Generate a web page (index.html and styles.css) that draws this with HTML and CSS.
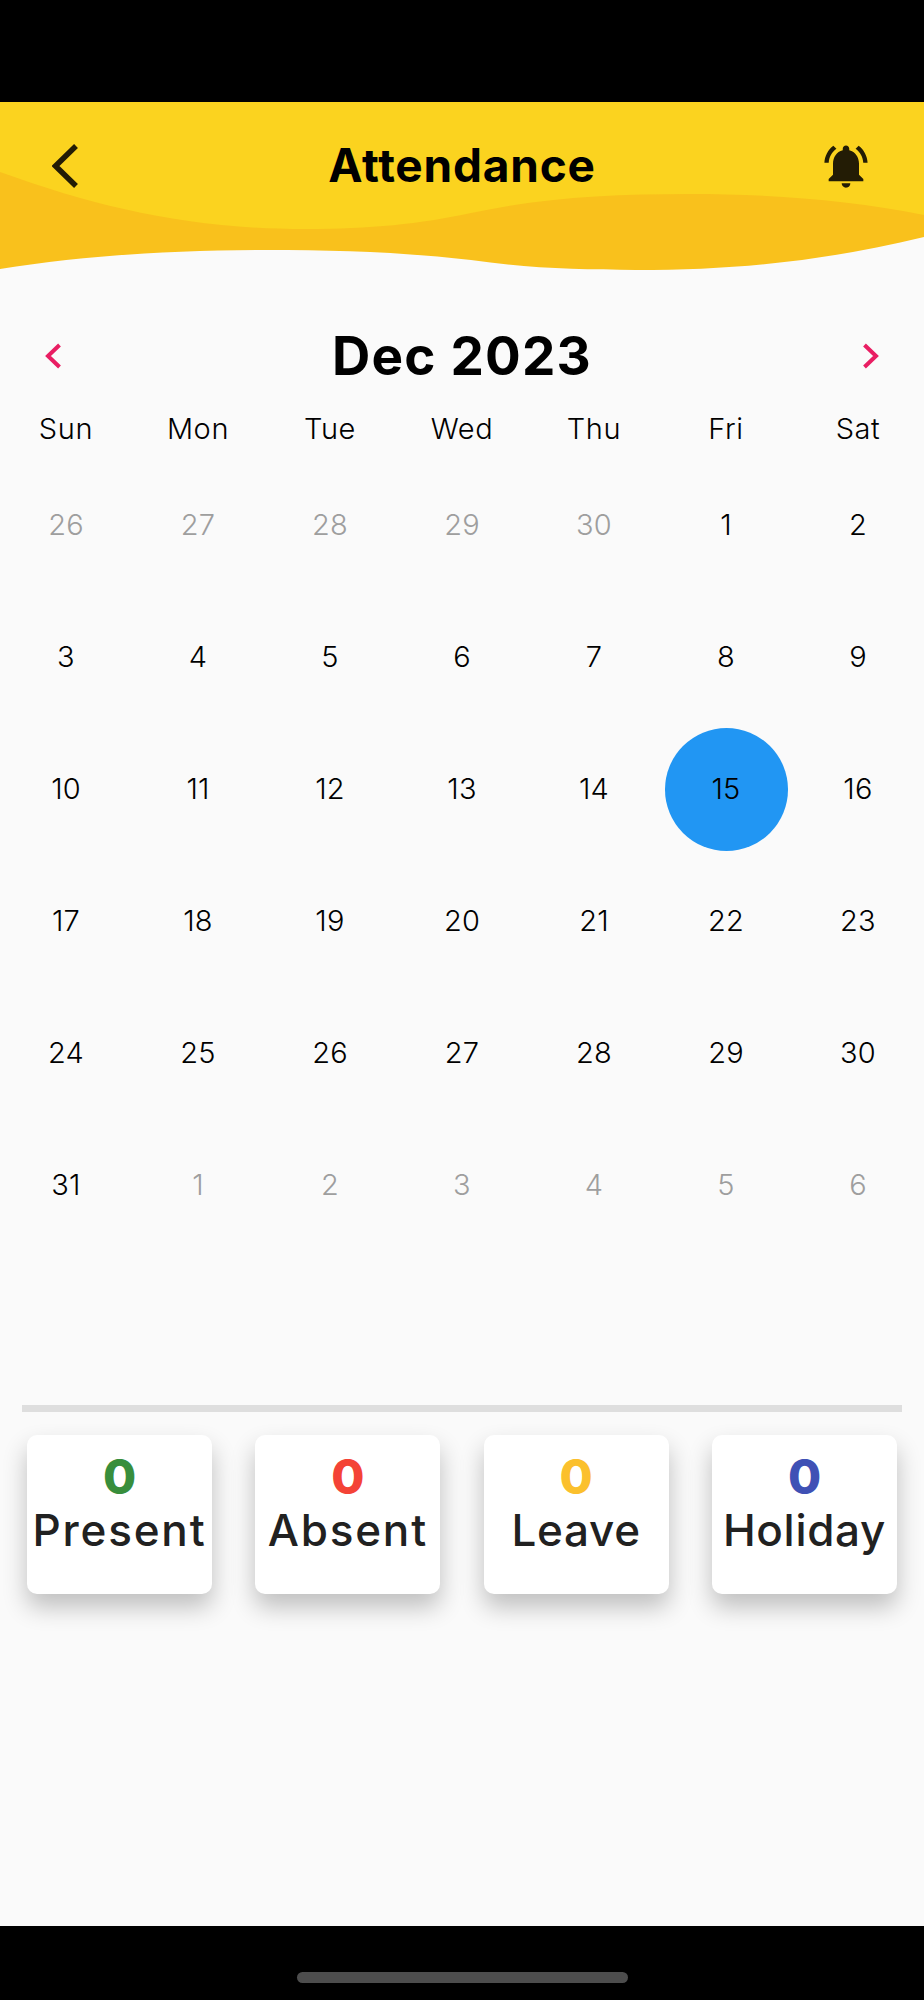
FILE: index.html
```html
<!doctype html>
<html lang="en">
    <head>
        <meta charset="UTF-8" />
        <meta name="viewport" content="width=device-width, initial-scale=1.0" />
        <title>Attendance</title>
        <link rel="stylesheet" href="styles.css">
    </head>
    <body>
        <div class="status-bar"></div>

        <main class="screen">
            <header class="app-header">
                <svg class="waves" viewBox="0 0 924 170" preserveAspectRatio="none">
                    <path fill="#f9c11c" d="M0 0H924V135C830 158 740 168 636 168C580 168 525 166 471 158C400 150 340 148 265 148C170 148 80 154 0 167Z" />
                    <path fill="#fbd31f" d="M0 0H924V113C850 98 770 92 689 92C610 92 540 96 471 111C420 122 370 127 306 127C190 127 100 106 0 70Z" />
                </svg>
                <div class="nav-bar">
                    <svg class="back-icon" viewBox="0 0 26 44">
                        <path d="M24 2L3.5 22L24 42" fill="none" stroke="#231c05" stroke-width="5.5" />
                    </svg>
                    <h1 class="page-title">Attendance</h1>
                    <svg class="bell-icon" viewBox="0 0 24 24">
                        <path fill="#231c05" d="M7.58 4.08L6.15 2.65C3.75 4.48 2.17 7.3 2.03 10.5h2c.15-2.65 1.51-4.97 3.55-6.42zm12.39 6.42h2c-.15-3.2-1.73-6.02-4.12-7.85l-1.42 1.43c2.02 1.45 3.39 3.77 3.54 6.42zM18 11c0-3.07-1.64-5.64-4.5-6.32V4c0-.83-.67-1.5-1.5-1.5s-1.5.67-1.5 1.5v.68C7.63 5.36 6 7.92 6 11v5l-2 2v1h16v-1l-2-2v-5zm-6 11c.14 0 .27-.01.4-.04.65-.14 1.18-.58 1.44-1.18.1-.24.15-.5.15-.78h-4c.01 1.1.9 2 2.01 2z" />
                    </svg>
                </div>
            </header>

            <section class="calendar">
                <div class="month-bar">
                    <svg class="month-arrow" viewBox="0 0 18 26">
                        <path d="M15.5 2L4 13L15.5 24" fill="none" stroke="#e91e63" stroke-width="4" />
                    </svg>
                    <h2 class="month-title">Dec 2023</h2>
                    <svg class="month-arrow" viewBox="0 0 18 26">
                        <path d="M2.5 2L14 13L2.5 24" fill="none" stroke="#e91e63" stroke-width="4" />
                    </svg>
                </div>

                <div class="week-days">
                    <span>Sun</span>
                    <span>Mon</span>
                    <span>Tue</span>
                    <span>Wed</span>
                    <span>Thu</span>
                    <span>Fri</span>
                    <span>Sat</span>
                </div>

                <div class="days">
                    <span class="day muted">26</span>
                    <span class="day muted">27</span>
                    <span class="day muted">28</span>
                    <span class="day muted">29</span>
                    <span class="day muted">30</span>
                    <span class="day">1</span>
                    <span class="day">2</span>

                    <span class="day">3</span>
                    <span class="day">4</span>
                    <span class="day">5</span>
                    <span class="day">6</span>
                    <span class="day">7</span>
                    <span class="day">8</span>
                    <span class="day">9</span>

                    <span class="day">10</span>
                    <span class="day">11</span>
                    <span class="day">12</span>
                    <span class="day">13</span>
                    <span class="day">14</span>
                    <span class="day selected">15</span>
                    <span class="day">16</span>

                    <span class="day">17</span>
                    <span class="day">18</span>
                    <span class="day">19</span>
                    <span class="day">20</span>
                    <span class="day">21</span>
                    <span class="day">22</span>
                    <span class="day">23</span>

                    <span class="day">24</span>
                    <span class="day">25</span>
                    <span class="day">26</span>
                    <span class="day">27</span>
                    <span class="day">28</span>
                    <span class="day">29</span>
                    <span class="day">30</span>

                    <span class="day">31</span>
                    <span class="day muted">1</span>
                    <span class="day muted">2</span>
                    <span class="day muted">3</span>
                    <span class="day muted">4</span>
                    <span class="day muted">5</span>
                    <span class="day muted">6</span>
                </div>
            </section>

            <hr class="divider" />

            <section class="summary">
                <div class="card">
                    <span class="count present">0</span>
                    <span class="label wide">Present</span>
                </div>
                <div class="card">
                    <span class="count absent">0</span>
                    <span class="label wide">Absent</span>
                </div>
                <div class="card">
                    <span class="count leave">0</span>
                    <span class="label">Leave</span>
                </div>
                <div class="card">
                    <span class="count holiday">0</span>
                    <span class="label">Holiday</span>
                </div>
            </section>
        </main>

        <div class="nav-strip">
            <div class="home-pill"></div>
        </div>
    </body>
</html>
```

FILE: styles.css
```css
* {
    box-sizing: border-box;
}
body {
    margin: 0;
    height: 2000px;
    display: flex;
    flex-direction: column;
    background-color: #000;
    font-family: Inter, "Liberation Sans", sans-serif;
    color: #000;
    overflow: hidden;
}
.status-bar {
    height: 102px;
}
.screen {
    flex: 1;
    background-color: #fafafa;
}
.nav-strip {
    height: 74px;
    padding-top: 46px;
    display: flex;
    justify-content: center;
}
.home-pill {
    width: 331px;
    height: 11px;
    border-radius: 6px;
    background-color: #4d4d4d;
}

/* Header */
.app-header {
    position: relative;
    height: 170px;
}
.waves {
    position: absolute;
    top: 0;
    left: 0;
    width: 100%;
    height: 170px;
    display: block;
}
.nav-bar {
    position: relative;
    display: grid;
    grid-template-columns: 1fr auto 1fr;
    align-items: center;
    height: 128px;
    padding: 0 52px;
}
.back-icon {
    width: 26px;
    height: 44px;
}
.page-title {
    margin: 0 0 2px;
    font-size: 46px;
    font-weight: 700;
    letter-spacing: 0.8px;
    line-height: 1;
}
.bell-icon {
    width: 52px;
    height: 52px;
    justify-self: end;
}

/* Calendar */
.calendar {
    height: 1133px;
    padding-top: 49px;
}
.month-bar {
    display: grid;
    grid-template-columns: 1fr auto 1fr;
    align-items: center;
    height: 70px;
    padding: 0 44px;
}
.month-bar .month-arrow:last-child {
    justify-self: end;
}
.month-arrow {
    width: 18px;
    height: 26px;
}
.month-title {
    margin: 0;
    font-size: 53px;
    font-weight: 700;
    letter-spacing: 1.2px;
    line-height: 1;
}
.week-days,
.days {
    display: grid;
    grid-template-columns: repeat(7, 132px);
}
.week-days {
    height: 60px;
    margin: 7px 0 1px;
    font-size: 29px;
    font-weight: 350;
    letter-spacing: 0.6px;
    text-align: center;
    align-items: center;
}
.days {
    grid-auto-rows: 132px;
}
.day {
    display: flex;
    align-items: center;
    justify-content: center;
    padding-bottom: 2px;
    font-size: 29px;
    font-weight: 350;
    letter-spacing: 0.2px;
}
.muted {
    color: #9e9e9e;
}
.selected {
    width: 123px;
    height: 123px;
    margin: auto;
    border-radius: 50%;
    background-color: #2196f3;
}

/* Summary cards */
.divider {
    height: 7px;
    margin: 0 22px;
    border: none;
    background-color: #dedede;
}
.summary {
    display: flex;
    justify-content: space-between;
    padding: 23px 27px 0 27px;
}
.card {
    width: 185px;
    height: 159px;
    padding-top: 17px;
    display: flex;
    flex-direction: column;
    align-items: center;
    border-radius: 10px;
    background-color: #fff;
    box-shadow: 0 13px 24px rgba(0, 0, 0, 0.24);
}
.count {
    font-size: 48px;
    font-weight: 800;
    line-height: 50px;
}
.label {
    font-size: 44px;
    font-weight: 500;
    letter-spacing: 0.7px;
    line-height: 57px;
    color: #212121;
    white-space: nowrap;
}
.wide {
    letter-spacing: 1.8px;
}
.present {
    color: #388e3c;
}
.absent {
    color: #f44336;
}
.leave {
    color: #fbc02d;
}
.holiday {
    color: #3f51b5;
}
```
